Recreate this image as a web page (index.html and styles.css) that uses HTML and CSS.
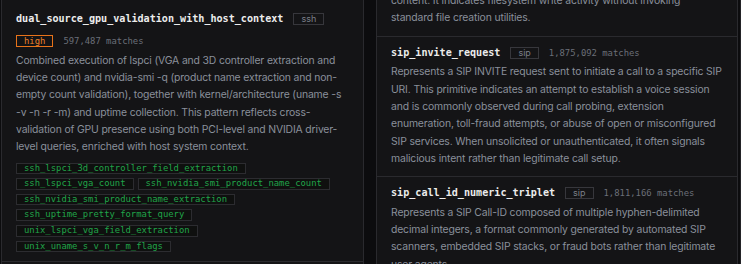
FILE: index.html
```html
<!DOCTYPE html>
<html lang="en">
<head>
<meta charset="utf-8">
<title>Primitives</title>
<link rel="stylesheet" href="styles.css">
</head>
<body>
<div class="board">
  <div class="col">
    <article class="card card-first">
      <div class="head">
        <span class="name">dual_source_gpu_validation_with_host_context</span>
        <span class="proto">ssh</span>
        <span class="sev">high</span>
        <span class="matches">597,487 matches</span>
      </div>
      <p class="desc">Combined execution of lspci (VGA and 3D controller extraction and device count) and nvidia-smi -q (product name extraction and non-empty count validation), together with kernel/architecture (uname -s -&#8288;v -n -r -m) and uptime collection. This pattern reflects cross-validation of GPU presence using both PCI-level and NVIDIA driver-level queries, enriched with host system context.</p>
      <div class="tags">
        <span class="tag">ssh_lspci_3d_controller_field_extraction</span>
        <span class="tag">ssh_lspci_vga_count</span>
        <span class="tag">ssh_nvidia_smi_product_name_count</span>
        <span class="tag">ssh_nvidia_smi_product_name_extraction</span>
        <span class="tag">ssh_uptime_pretty_format_query</span>
        <span class="tag">unix_lspci_vga_field_extraction</span>
        <span class="tag">unix_uname_s_v_n_r_m_flags</span>
      </div>
    </article>
    <article class="card card-next"></article>
  </div>
  <div class="col">
    <article class="card card-cut">
      <p class="desc">content. It indicates filesystem write activity without invoking standard file creation utilities.</p>
    </article>
    <article class="card">
      <div class="head">
        <span class="name">sip_invite_request</span>
        <span class="proto">sip</span>
        <span class="matches">1,875,092 matches</span>
      </div>
      <p class="desc">Represents a SIP INVITE request sent to initiate a call to a specific SIP URI. This primitive indicates an attempt to establish a voice session and is commonly observed during call probing, extension enumeration, toll-fraud attempts, or abuse of open or misconfigured SIP services. When unsolicited or unauthenticated, it often signals malicious intent rather than legitimate call setup.</p>
    </article>
    <article class="card">
      <div class="head">
        <span class="name">sip_call_id_numeric_triplet</span>
        <span class="proto">sip</span>
        <span class="matches">1,811,166 matches</span>
      </div>
      <p class="desc">Represents a SIP Call-ID composed of multiple hyphen-delimited decimal integers, a format commonly generated by automated SIP scanners, embedded SIP stacks, or fraud bots rather than legitimate user agents.</p>
    </article>
  </div>
</div>
</body>
</html>
```
FILE: styles.css
```css
html, body {
  margin: 0;
  padding: 0;
  background: #0c0c0e;
  height: 264px;
  overflow: hidden;
}

body {
  font-family: Inter, "Noto Sans", sans-serif;
  box-sizing: border-box;
  border-right: 1px solid #232327;
}

.board {
  display: grid;
  grid-template-columns: 363px 362px;
  column-gap: 12px;
  padding-left: 1px;
  align-items: start;
}

.col {
  display: flex;
  flex-direction: column;
}

.card {
  background: #141416;
  border: 1px solid #2a2a2e;
  padding: 10px 14px 9px;
}

.card + .card {
  border-top: none;
}

.card-first {
  margin-top: -1px;
  padding-top: 13px;
}

.card-next {
  min-height: 40px;
}

.card-cut {
  margin-top: -9px;
  padding-top: 0;
}

.head {
  display: flex;
  flex-wrap: wrap;
  align-items: center;
  gap: 10px;
}

.name {
  font-family: "DejaVu Sans Mono", "Liberation Mono", monospace;
  font-weight: 700;
  font-size: 10.1px;
  line-height: 12px;
  color: #ececec;
}

.proto {
  border: 1px solid #37373c;
  color: #7b7f88;
  font-size: 9px;
  line-height: 10px;
  padding: 0 7px;
}

.sev {
  border: 1px solid #e8731a;
  color: #f0832a;
  font-family: "DejaVu Sans Mono", "Liberation Mono", monospace;
  font-size: 8.9px;
  line-height: 10px;
  padding: 0 7px;
}

.matches {
  font-family: "DejaVu Sans Mono", "Liberation Mono", monospace;
  font-size: 8.9px;
  line-height: 12px;
  color: #6b6f78;
}

.desc {
  margin: 4.5px 0 0;
  font-size: 10.4px;
  letter-spacing: -0.15px;
  line-height: 17.35px;
  color: #8a909b;
}

.card-cut .desc {
  margin-top: 0;
}

.tags {
  display: flex;
  flex-wrap: wrap;
  gap: 4px;
  margin-top: 7px;
}

.tag {
  font-family: "DejaVu Sans Mono", "Liberation Mono", monospace;
  font-size: 8.9px;
  line-height: 9.6px;
  color: #20a449;
  background: #0f100f;
  border: 1px solid #2c2c30;
  padding: 0 7px;
}
```
